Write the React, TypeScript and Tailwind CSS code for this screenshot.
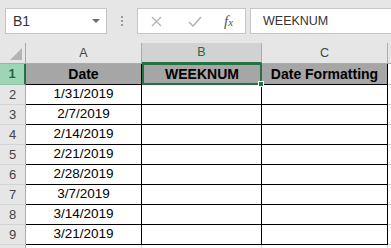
import { type ReactNode } from 'react';

const dates = ['1/31/2019', '2/7/2019', '2/14/2019', '2/21/2019', '2/28/2019', '3/7/2019', '3/14/2019', '3/21/2019'];

function RowHead({ n, active }: { n: number; active?: boolean }) {
    return (
        <div
            className={`w-[26px] shrink-0 flex items-center justify-center text-[13px] border-b ${
                active
                    ? 'bg-[#9fd5b7] text-[#1e6b41] border-r-2 border-r-[#217346] border-b-[#8cc5a5]'
                    : 'bg-[#e6e6e6] text-[#444] border-r border-r-[#ababab] border-b-[#d4d4d4]'
            }`}
        >
            {n}
        </div>
    );
}

function Cell({ w, children, className = '' }: { w: string; children?: ReactNode; className?: string }) {
    return <div className={`${w} shrink-0 flex items-center justify-center border-r border-b border-black ${className}`}>{children}</div>;
}

export default function App() {
    return (
        <div className="w-[391px] h-[248px] overflow-hidden bg-white font-['Liberation_Sans',Arial,sans-serif] text-black">
            {/* formula bar */}
            <div className="h-[43px] bg-[#e6e6e6] flex items-start pt-[8px]">
                <div className="ml-[5px] w-[102px] h-[26px] bg-white border border-[#c6c6c6] flex items-center justify-between pl-[7px] pr-[6px]">
                    <span className="text-[14px] text-[#333]">B1</span>
                    <svg width="8" height="5" viewBox="0 0 8 5">
                        <polygon points="0,0 8,0 4,4" fill="#6d6d6d" />
                    </svg>
                </div>
                <div className="w-[30px] h-[26px] flex flex-col items-center justify-center gap-[2px]">
                    <span className="w-[2px] h-[2px] bg-[#9a9a9a]" />
                    <span className="w-[2px] h-[2px] bg-[#9a9a9a]" />
                    <span className="w-[2px] h-[2px] bg-[#9a9a9a]" />
                </div>
                <div className="w-[109px] h-[26px] bg-white border border-[#c6c6c6] flex items-center">
                    <svg className="ml-[13px]" width="11" height="11" viewBox="0 0 11 11">
                        <path d="M1 1 L10 10 M10 1 L1 10" stroke="#b5b5b5" strokeWidth="1.4" />
                    </svg>
                    <svg className="ml-[26px]" width="14" height="11" viewBox="0 0 14 11">
                        <path d="M1 6 L5 10 L13 1" stroke="#b5b5b5" strokeWidth="1.6" fill="none" />
                    </svg>
                    <span className="ml-[22px] font-['Liberation_Serif',serif] italic text-[15px] text-[#555] leading-none">
                        f<span className="text-[11px]">x</span>
                    </span>
                </div>
                <div className="ml-[4px] flex-1 h-[26px] bg-white border border-r-0 border-[#c6c6c6] flex items-center pl-[12px]">
                    <span className="text-[12.5px] text-[#333]">WEEKNUM</span>
                </div>
            </div>

            {/* column headers */}
            <div className="flex h-[21px] bg-[#e6e6e6] text-[12.5px] text-[#444]">
                <div className="w-[26px] shrink-0 border-r border-b border-[#ababab] flex items-end justify-end pr-[3px] pb-[3px]">
                    <svg width="12" height="12" viewBox="0 0 12 12">
                        <polygon points="12,0 12,12 0,12" fill="#b4b4b4" />
                    </svg>
                </div>
                <div className="w-[116px] shrink-0 border-r border-b border-[#ababab] flex items-center justify-center">A</div>
                <div className="w-[120px] shrink-0 bg-[#d2d2d2] border-r border-[#ababab] border-b-2 border-b-[#217346] flex items-center justify-center text-[#1e6b41]">
                    B
                </div>
                <div className="w-[126px] shrink-0 border-r border-b border-[#ababab] flex items-center justify-center">C</div>
                <div className="flex-1 border-b border-[#ababab]" />
            </div>

            {/* row 1 */}
            <div className="flex h-[21px] text-[14px] font-bold">
                <RowHead n={1} active />
                <Cell w="w-[116px]" className="bg-[#a6a6a6]">Date</Cell>
                <div className="relative w-[120px] shrink-0 flex items-center justify-center bg-[#a6a6a6] border-2 border-[#217346] -mt-[1px] h-[22px]">
                    WEEKNUM
                    <span className="absolute -right-[4px] -bottom-[4px] w-[6px] h-[6px] bg-[#217346] border border-white" />
                </div>
                <Cell w="w-[126px]" className="bg-[#a6a6a6] border-l-0">Date Formatting</Cell>
                <div className="flex-1 border-b border-[#d4d4d4]" />
            </div>

            {/* data rows */}
            {dates.map((d, i) => (
                <div key={d} className="flex h-[20px] text-[13.5px]">
                    <RowHead n={i + 2} />
                    <Cell w="w-[116px]">{d}</Cell>
                    <Cell w="w-[120px]" />
                    <Cell w="w-[126px]" />
                    <div className="flex-1 border-b border-[#d4d4d4]" />
                </div>
            ))}
            <div className="flex h-[10px]">
                <div className="w-[26px] shrink-0 bg-[#e6e6e6] border-r border-[#ababab]" />
                <div className="w-[116px] shrink-0 border-r border-[#d4d4d4]" />
                <div className="w-[120px] shrink-0 border-r border-[#d4d4d4]" />
                <div className="w-[126px] shrink-0 border-r border-[#d4d4d4]" />
            </div>
        </div>
    );
}
